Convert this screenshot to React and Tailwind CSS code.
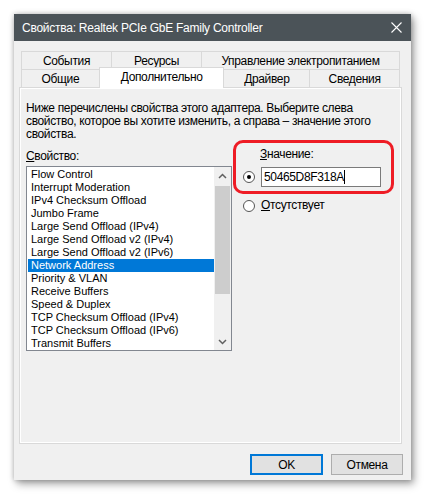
import React from "react";

const ui = { fontFamily: '"Liberation Sans", Arial, sans-serif' };

const items = [
  "Flow Control",
  "Interrupt Moderation",
  "IPv4 Checksum Offload",
  "Jumbo Frame",
  "Large Send Offload (IPv4)",
  "Large Send Offload v2 (IPv4)",
  "Large Send Offload v2 (IPv6)",
  "Network Address",
  "Priority & VLAN",
  "Receive Buffers",
  "Speed & Duplex",
  "TCP Checksum Offload (IPv4)",
  "TCP Checksum Offload (IPv6)",
  "Transmit Buffers",
];

function Radio({ checked }) {
  return (
    <span className="w-[12px] h-[12px] rounded-full border border-[#555] bg-white flex items-center justify-center shrink-0">
      {checked && <span className="w-[4px] h-[4px] rounded-full bg-black" />}
    </span>
  );
}

function Chevron({ down }) {
  return (
    <svg width="9" height="6" viewBox="0 0 9 6">
      <path
        d={down ? "M1 1 L4.5 4.5 L8 1" : "M1 5 L4.5 1.5 L8 5"}
        fill="none"
        stroke="#606060"
        strokeWidth="1.5"
      />
    </svg>
  );
}

export default function App() {
  return (
    <div className="min-h-[494px] bg-white pt-[14px] pl-[14px] text-[12px] tracking-[-0.35px] text-black" style={ui}>
      <div className="w-[397px] h-[466px] bg-[#f0f0f0] flex flex-col shadow-[0_0_5px_rgba(0,0,0,0.25),3px_4px_8px_rgba(0,0,0,0.35)]">
        {/* title bar */}
        <div className="h-[27px] bg-[#4b5358] flex items-center justify-between pl-[8px] pr-[9px] text-white">
          <span className="text-[12px] tracking-[-0.25px]">Свойства: Realtek PCIe GbE Family Controller</span>
          <svg width="11" height="11" viewBox="0 0 11 11">
            <path d="M0.5 0.5 L10.5 10.5 M10.5 0.5 L0.5 10.5" stroke="#fff" strokeWidth="1.1" />
          </svg>
        </div>

        <div className="pl-[5px] pt-[10px]">
          {/* tabs */}
          <div className="ml-[2px] w-[379px]">
            <div className="flex h-[18px]">
              <div className="w-[91px] border border-b-0 border-[#d9d9d9] flex items-center justify-center">События</div>
              <div className="w-[91px] -ml-px border border-b-0 border-[#d9d9d9] flex items-center justify-center">Ресурсы</div>
              <div className="w-[199px] -ml-px border border-b-0 border-[#d9d9d9] flex items-center justify-center">Управление электропитанием</div>
            </div>
            <div className="flex items-end h-[18px]">
              <div className="w-[79px] h-[18px] border border-b-0 border-[#d9d9d9] flex items-center justify-center">Общие</div>
              <div className="w-[126px] h-[21px] -ml-px -mb-px relative z-10 bg-white border border-b-0 border-[#d9d9d9] flex items-center justify-center pb-[2px]">
                Дополнительно
              </div>
              <div className="w-[87px] h-[18px] -ml-px border border-b-0 border-[#d9d9d9] flex items-center justify-center">Драйвер</div>
              <div className="w-[91px] h-[18px] -ml-px border border-b-0 border-[#d9d9d9] flex items-center justify-center">Сведения</div>
            </div>
          </div>

          {/* tab page */}
          <div className="w-[383px] h-[357px] border border-[#d9d9d9] shadow-[inset_0_0_0_1px_#ffffff] pl-[6px] pt-[14px]">
            <p className="leading-[13px] whitespace-nowrap">
              Ниже перечислены свойства этого адаптера. Выберите слева
              <br />
              свойство, которое вы хотите изменить, а справа – значение этого
              <br />
              свойства.
            </p>

            <div className="flex mt-[9px]">
              <div className="w-[206px]">
                <div className="leading-[13px]">
                  <span className="underline">С</span>войство:
                </div>
                <div className="mt-[3px] h-[185px] bg-white border border-[#828790] flex text-[11px] leading-[13px] tracking-normal">
                  <div className="flex-1 pt-px pl-px">
                    {items.map((it) => (
                      <div
                        key={it}
                        className={`h-[13px] pl-[3px] whitespace-nowrap ${
                          it === "Network Address" ? "bg-[#0078d7] text-white" : ""
                        }`}
                      >
                        {it}
                      </div>
                    ))}
                  </div>
                  <div className="w-[17px] bg-[#f0f0f0] flex flex-col">
                    <div className="h-[17px] flex items-center justify-center">
                      <Chevron />
                    </div>
                    <div className="h-[108px] mx-px mt-[2px] bg-[#cdcdcd]" />
                    <div className="flex-1" />
                    <div className="h-[17px] flex items-center justify-center">
                      <Chevron down />
                    </div>
                  </div>
                </div>
              </div>

              <div className="relative ml-[11px] -mt-[2px]">
                <div className="absolute left-[-10px] top-[-8px] w-[161px] h-[54px] rounded-[10px] border-[3.5px] border-[#ee1c25]" />
                <div className="pl-[17px] leading-[13px]">
                  <span className="underline">З</span>начение:
                </div>
                <div className="flex items-center gap-[6px] mt-[6px]">
                  <Radio checked />
                  <div className="w-[120px] h-[20px] bg-white border border-[#7a7a7a] flex items-center pl-[2px]">
                    <span>50465D8F318A</span>
                    <span className="w-px h-[14px] bg-black" />
                  </div>
                </div>
                <div className="flex items-center gap-[6px] mt-[12px] leading-[13px]">
                  <Radio />
                  <span>
                    <span className="underline">О</span>тсутствует
                  </span>
                </div>
              </div>
            </div>
          </div>

          {/* buttons */}
          <div className="flex justify-end gap-[8px] mt-[10px] pr-[8px]">
            <button className="w-[73px] h-[21px] bg-[#e1e1e1] border-2 border-[#0078d7] flex items-center justify-center">
              OK
            </button>
            <button className="w-[72px] h-[21px] bg-[#e1e1e1] border border-[#adadad] flex items-center justify-center">
              Отмена
            </button>
          </div>
        </div>
      </div>
    </div>
  );
}
